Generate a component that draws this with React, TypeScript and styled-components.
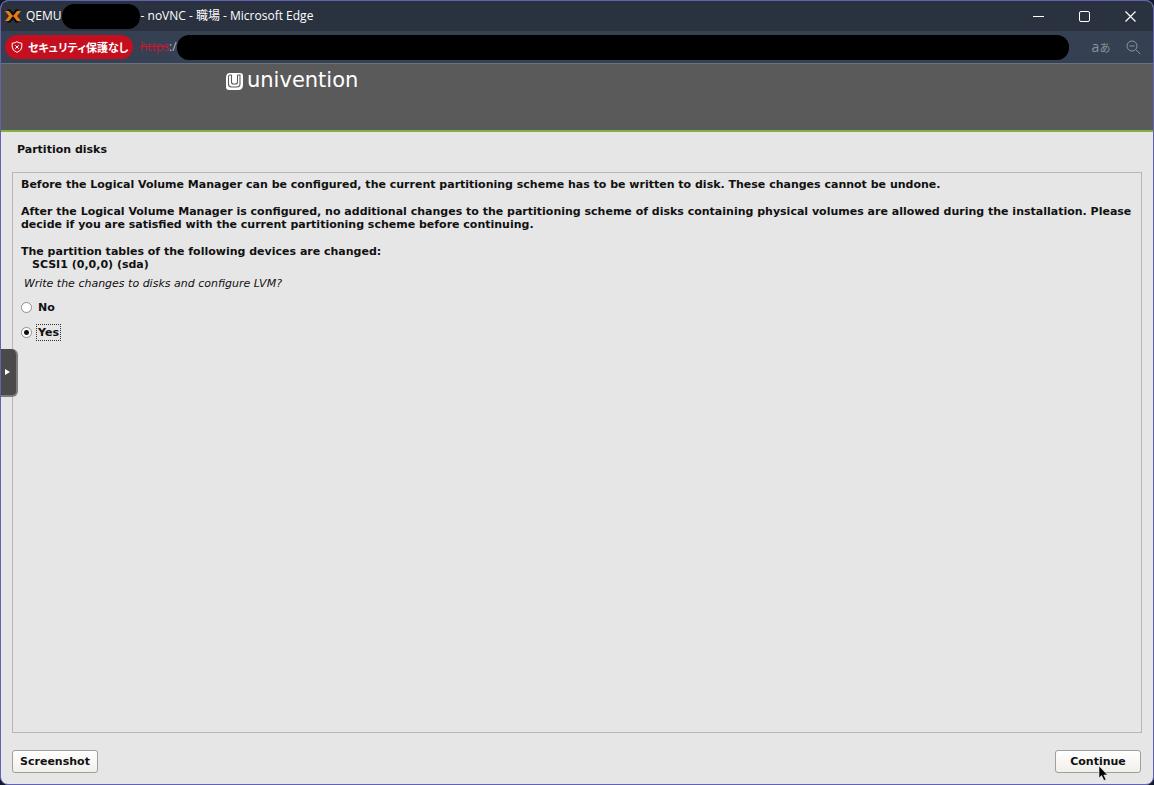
import React, { useState } from 'react';
import styled, { createGlobalStyle } from 'styled-components';

const uiFont = '"Open Sans", "Noto Sans CJK JP", sans-serif';
const installerFont = '"DejaVu Sans", sans-serif';

const GlobalStyle = createGlobalStyle`
  *, *::before, *::after { box-sizing: border-box; }
  body { margin: 0; background: #10182c; }
`;

const Frame = styled.div`
  display: flex;
  flex-direction: column;
  min-height: 100vh;
  border: 1px solid #6262b2;
  border-radius: 8px;
  overflow: hidden;
  background: #e6e6e6;
  color: #111;
  font: bold 11px/13px ${installerFont};
`;

const TitleBar = styled.header`
  display: flex;
  align-items: center;
  height: 30px;
  padding-left: 4px;
  background: #2a323f;
  color: #fff;
  font: 12px/30px ${uiFont};
`;

const TitleText = styled.span`
  white-space: pre;
`;

const AppIcon = styled.svg`
  width: 16px;
  height: 16px;
  margin-right: 5px;
`;

const NameMask = styled.span`
  width: 78px;
  height: 25px;
  margin-right: 1px;
  border-radius: 12px;
  background: #000;
`;

const WindowControls = styled.div`
  display: flex;
  margin-left: auto;
`;

const WindowButton = styled.button`
  display: grid;
  place-items: center;
  width: 46px;
  height: 30px;
  padding: 0;
  border: 0;
  background: none;
  color: #fff;
`;

const AddressBar = styled.div`
  display: flex;
  align-items: center;
  height: 33px;
  padding: 0 4px;
  border-bottom: 1px solid #69737d;
  background: #354152;
  font: 12px/24px ${uiFont};
`;

const SecurityBadge = styled.button`
  display: flex;
  align-items: center;
  gap: 5px;
  width: 128px;
  height: 24px;
  padding: 0 6px;
  border: 0;
  border-radius: 12px;
  background: #c50f1f;
  color: #fff;
  font: bold 11px/24px "Noto Sans CJK JP", sans-serif;
  font-feature-settings: "palt";
  white-space: nowrap;

  svg { flex: none; }
`;

const Scheme = styled.span`
  margin-left: 7px;
  color: #bf1b32;
  text-decoration: line-through;
`;

const SchemeRest = styled.span`
  color: #b4bac2;
`;

const UrlMask = styled.span`
  flex: 1;
  height: 25px;
  margin-right: 16px;
  border-radius: 12px;
  background: #000;
`;

const ToolButton = styled.button`
  display: grid;
  place-items: center;
  width: 32px;
  height: 24px;
  padding: 0;
  border: 0;
  background: none;
  color: #8b929c;
  font: 14px/24px "Open Sans", "Noto Sans CJK JP", sans-serif;

  small { font-size: 11px; }
`;

const Brand = styled.div`
  display: flex;
  align-items: flex-start;
  gap: 4px;
  height: 68px;
  padding: 5px 0 0 225px;
  border-bottom: 2px solid #83b141;
  background: #5a5a5a;
  color: #fff;
  font: 21px/22px ${installerFont};
`;

const BrandMark = styled.svg`
  width: 17px;
  height: 17px;
  margin-top: 4px;
`;

const Installer = styled.main`
  display: flex;
  flex: 1;
  flex-direction: column;
  padding: 11px 12px 11px 11px;
`;

const Heading = styled.h1`
  margin: 0 5px 16px;
  font-size: 11px;
  line-height: 13px;
`;

const Panel = styled.section`
  flex: 1;
  margin-right: -1px;
  padding: 5px 8px;
  border: 1px solid #b6b6b6;
`;

const Paragraph = styled.p`
  margin: 0 0 14px;
`;

const Devices = styled.div`
  padding-left: 11px;
`;

const Choices = styled.fieldset`
  display: flex;
  flex-direction: column;
  align-items: flex-start;
  gap: 7px;
  margin: 6px 0 0;
  padding: 0;
  border: 0;
`;

const Question = styled.legend`
  margin-bottom: 8px;
  padding: 0 3px;
  font-style: italic;
  font-weight: normal;
`;

const Choice = styled.label`
  display: flex;
  align-items: center;
  gap: 4px;
  height: 18px;
`;

const ChoiceText = styled.span<{ $active: boolean }>`
  padding: 1px;
  border: 1px dotted ${({ $active }) => ($active ? '#333' : 'transparent')};
`;

const Radio = styled.input`
  appearance: none;
  width: 11px;
  height: 11px;
  margin: 0;
  border: 1px solid #8f8f8b;
  border-radius: 50%;
  outline: none;
  background: #fff;

  &:checked {
    background: radial-gradient(circle, #111 0 2px, #fff 3px);
  }
`;

const Footer = styled.footer`
  display: flex;
  justify-content: space-between;
  margin-top: 17px;
`;

const PushButton = styled.button`
  position: relative;
  width: 86px;
  height: 23px;
  padding: 0;
  border: 1px solid #a09f98;
  border-radius: 3px;
  background: linear-gradient(#fff, #f1efeb);
  color: #111;
  font: bold 11px/13px ${installerFont};
`;

const Pointer = styled.svg`
  position: absolute;
  top: 14px;
  left: 42px;
  width: 10px;
  height: 16px;
`;

const DrawerHandle = styled.button`
  position: absolute;
  top: 349px;
  left: 1px;
  display: grid;
  place-items: center;
  width: 17px;
  height: 48px;
  padding: 0 3px 0 0;
  border: 0;
  border-right: 2px solid #7c7c7a;
  border-bottom: 2px solid #7c7c7a;
  border-radius: 0 6px 6px 0;
  background: #4a4a4a;
`;

const options = ['No', 'Yes'];

export default function App() {
  const [answer, setAnswer] = useState('Yes');

  return (
    <>
      <GlobalStyle />
      <Frame>
        <TitleBar>
          <AppIcon viewBox="0 0 16 16" aria-hidden="true">
            <path d="M2 1.500h3.500L8 5l2.500-3.500H14L9.500 7.500h-3zM2 14.500h3.500L8 11l2.500 3.500H14L9.500 8.500h-3z" fill="#080808" />
            <path d="M0 3h4l4 5-4 5H0l4-5zM16 3h-4L8 8l4 5h4l-4-5z" fill="#e57b13" />
          </AppIcon>
          <TitleText>QEMU</TitleText>
          <NameMask />
          <TitleText>- noVNC - 職場 - Microsoft Edge</TitleText>
          <WindowControls>
            <WindowButton aria-label="Minimize">
              <svg width="11" height="11" stroke="currentColor"><path d="M0 5.500h11" /></svg>
            </WindowButton>
            <WindowButton aria-label="Maximize">
              <svg width="11" height="11" fill="none" stroke="currentColor"><rect x=".5" y=".5" width="10" height="10" rx="1.500" /></svg>
            </WindowButton>
            <WindowButton aria-label="Close">
              <svg width="11" height="11" stroke="currentColor" strokeWidth="1.200"><path d="M.5.5l10 10M10.500.5l-10 10" /></svg>
            </WindowButton>
          </WindowControls>
        </TitleBar>
        <AddressBar>
          <SecurityBadge>
            <svg width="12" height="12" viewBox="0 0 12 12" fill="none" stroke="currentColor" aria-hidden="true">
              <path d="M6 .6Q8 2.200 10.800 2.200V6Q10.800 9.500 6 11.400 1.200 9.500 1.200 6V2.200Q4 2.200 6 .6zM4.300 4.300l3.400 3.400M7.700 4.300L4.300 7.700" />
            </svg>
            セキュリティ保護なし
          </SecurityBadge>
          <Scheme>https</Scheme>
          <SchemeRest>:/</SchemeRest>
          <UrlMask />
          <ToolButton aria-label="Translate"><span>a<small>あ</small></span></ToolButton>
          <ToolButton aria-label="Zoom out">
            <svg width="15" height="15" fill="none" stroke="currentColor">
              <circle cx="6" cy="6" r="5" /><path d="M3.500 6h5M9.700 9.700l4.600 4.300" />
            </svg>
          </ToolButton>
        </AddressBar>
        <Brand>
          <BrandMark viewBox="0 0 17 17" aria-hidden="true">
            <path d="M4 0h10q3 0 3 3v9q0 5-5 5H3q-3 0-3-3V5q0-5 4-5z" fill="#fff" />
            <path d="M5.500 2H4q-1.500 0-1.500 2v7q0 3 3 3h5q3.500 0 3.500-3V2h-2.500M5.500 2v7q0 2 2 2h2q2 0 2-2V2" fill="none" stroke="#5a5a5a" strokeWidth="1.100" />
          </BrandMark>
          <span>univention</span>
        </Brand>
        <Installer>
          <Heading>Partition disks</Heading>
          <Panel>
            <Paragraph>
              Before the Logical Volume Manager can be configured, the current partitioning scheme has to be written to disk. These changes cannot be undone.
            </Paragraph>
            <Paragraph>
              After the Logical Volume Manager is configured, no additional changes to the partitioning scheme of disks containing physical volumes are allowed during the installation. Please decide if you are satisfied with the current partitioning scheme before continuing.
            </Paragraph>
            <div>The partition tables of the following devices are changed:</div>
            <Devices>SCSI1 (0,0,0) (sda)</Devices>
            <Choices>
              <Question>Write the changes to disks and configure LVM?</Question>
              {options.map((option) => (
                <Choice key={option}>
                  <Radio
                    type="radio"
                    name="write-changes"
                    value={option}
                    checked={answer === option}
                    onChange={() => setAnswer(option)}
                  />
                  <ChoiceText $active={answer === option}>{option}</ChoiceText>
                </Choice>
              ))}
            </Choices>
          </Panel>
          <Footer>
            <PushButton>Screenshot</PushButton>
            <PushButton>
              Continue
              <Pointer viewBox="0 0 10 16" aria-hidden="true">
                <path d="M1 1v12l2.600-2.400L6 15.500l2-1-2.200-4.500H9.500z" fill="#000" stroke="#eee" strokeWidth=".6" />
              </Pointer>
            </PushButton>
          </Footer>
        </Installer>
        <DrawerHandle aria-label="Open control bar">
          <svg width="5" height="6" fill="#fff"><path d="M0 0l5 3-5 3z" /></svg>
        </DrawerHandle>
      </Frame>
    </>
  );
}
